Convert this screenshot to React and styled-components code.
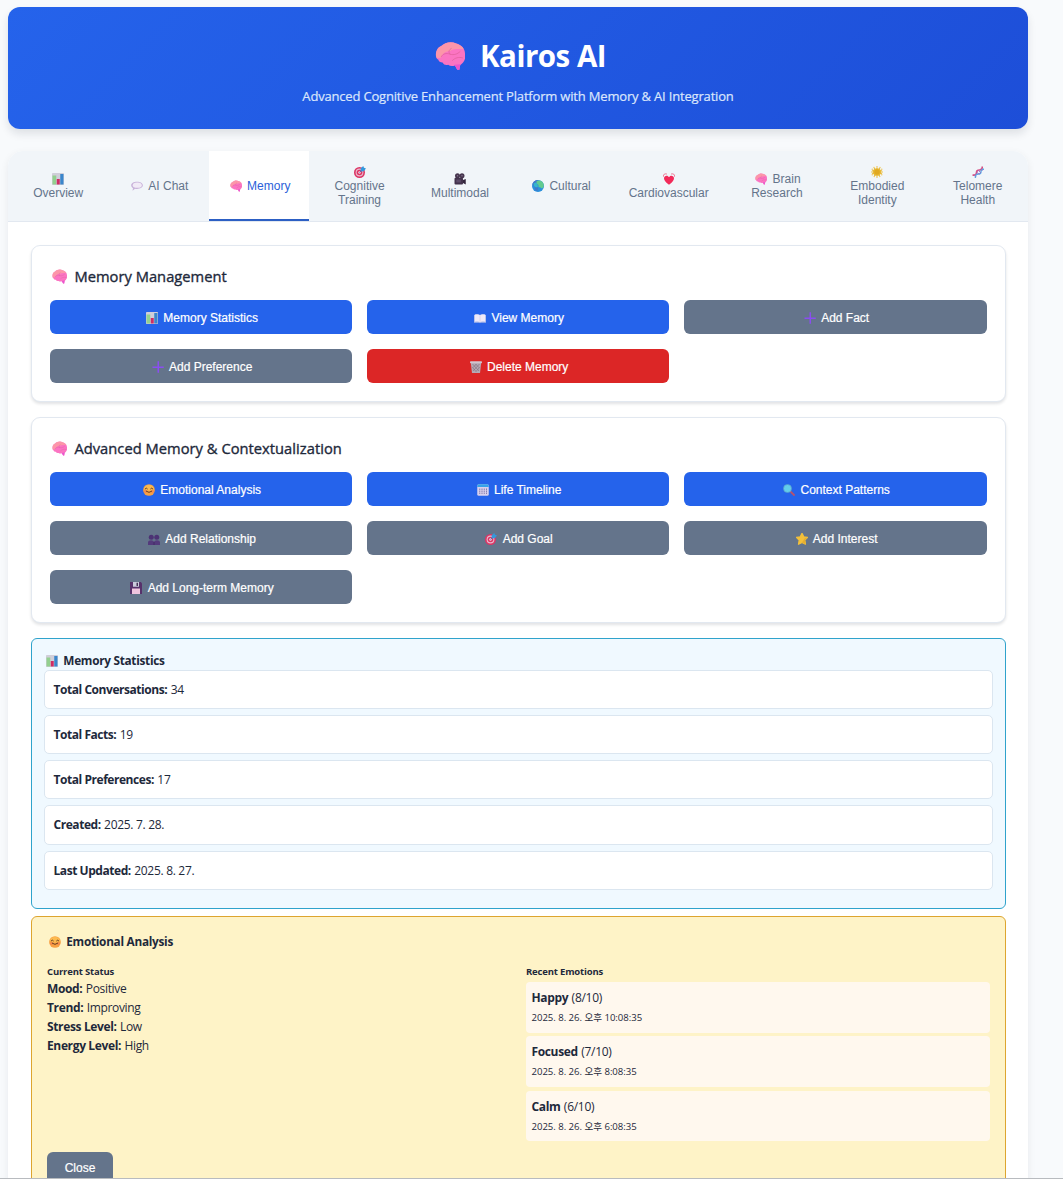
import React from "react";
import styled, { createGlobalStyle, css } from "styled-components";

const ui = `"Open Sans", "Noto Sans", "Noto Sans CJK KR", sans-serif`;
const control = `"Liberation Sans", Arial, sans-serif`;

const GlobalStyle = createGlobalStyle`
  *, *::before, *::after { box-sizing: border-box; }
  html, body { margin: 0; padding: 0; background: #f8fafc; }
  body { font-family: ${ui}; color: #1e293b; overflow: hidden; }
  h1, h2, h3, h4, p { margin: 0; }
`;

/* ---------- icons ---------- */

const glyphs = {
  brain: (
    <>
      <path d="M1 13C0 9 2 5 5 4c3-3 8-4 12-2 4 1 7 4 7 8 1 4-1 7-3 8.500l-1 1L19.500 23h-1.700L16 19.500c-2 .8-4 .6-5.500-.5-2 .5-3.500 0-4.500-1.800-1.800 0-3-.8-3.300-2.200C1.800 14.500 1.200 14 1 13z" fill="#fb74c2" />
      <path d="M1 13C0 9 2 5 5 4c3-3 8-4 12-2 3 .8 5 2.500 6 4.500-4 0-8-.5-11 1.500-4 .5-6 2-7 5-1 .8-3 1-4 0z" fill="#fb9ca4" opacity=".85" />
      <path d="M5 12.500c1.500-2.500 4-3 7-2 3 1 6 0 8-2M12 10.500c-1.500-1.500-1-3.500 1-4.500M14 15.500c2-2 5-3 8-2" stroke="#e0609c" strokeWidth=".6" fill="none" strokeLinecap="round" />
      <path d="M15.500 19l2.300 4h1.700l.8-4.500z" fill="#ea55cf" />
    </>
  ),
  chart: (
    <>
      <rect x="0" y="0" width="24" height="24" rx="1.500" fill="#d0ced9" />
      <rect x="1" y="5" width="7.500" height="18" fill="#93d08f" />
      <rect x="9.500" y="12" width="6" height="11" fill="#cf2c64" />
      <rect x="16.500" y="2" width="6.500" height="21" fill="#3a86cc" />
    </>
  ),
  chat: (
    <>
      <path d="M12 3.500c7 0 11.700 3.200 11.700 7.200S19 18 12 18c-1.500 0-3-.1-4-.4L3 21.500l1-5.200C1.500 14.900.3 13 .3 10.700.3 6.700 5 3.500 12 3.500z" fill="#c9b3da" />
      <ellipse cx="12.500" cy="10.300" rx="9" ry="5.200" fill="#f1eaf6" />
    </>
  ),
  target: (
    <>
      <circle cx="11" cy="13" r="11" fill="#dc3565" />
      <circle cx="11" cy="13" r="7.800" fill="#e9b9cd" />
      <circle cx="11" cy="13" r="5.600" fill="#dc3565" />
      <circle cx="11" cy="13" r="2.400" fill="#f3dce8" />
      <path d="M11 13L18 6" stroke="#7259a0" strokeWidth="1.800" />
      <path d="M13 10l.5-5.500L18.500 0l1.500 3.500L24 5l-4.500 5.500-5.500.3z" fill="#3498dc" />
    </>
  ),
  camera: (
    <>
      <circle cx="7" cy="5.500" r="5" fill="#47364f" />
      <circle cx="16" cy="5.500" r="5" fill="#47364f" />
      <rect x="1" y="9.500" width="17" height="13.500" rx="2" fill="#43324c" />
      <path d="M18 14l5.500-2v11L18 20z" fill="#34263d" />
      <rect x="4.500" y="13" width="9" height="6" fill="#5d4b69" />
      <circle cx="7" cy="5.500" r="1.500" fill="#85748f" />
      <circle cx="16" cy="5.500" r="1.500" fill="#85748f" />
    </>
  ),
  globe: (
    <>
      <circle cx="12" cy="12" r="12" fill="#2b90dc" />
      <path d="M12 0C6 0 2 4 .5 8.500L5 13l2 8 4 1 1-6-3-3 4-4-3-4z" fill="#4278c9" />
      <path d="M9 2.500c5-3 11-1 13.500 4C25 12 23 15 20 17l-3-2-4-1 0-4-4-3z" fill="#62cb8f" />
      <path d="M3 7l5-2 3 3 1 5-4 2-4-3z" fill="#35b6cc" />
    </>
  ),
  heart: (
    <>
      <path d="M12 23.500C5 18.500 2 14.500 2 10.500c0-6 8-7 10-2 2-5 10-4 10 2 0 4-3 8-10 13z" fill="#f22a59" />
      <path d="M.8 6.500C0 2.500 4 .8 7 1.800M23.200 6.500c.8-4-3.200-5.700-6.200-4.700" stroke="#f0718f" strokeWidth="2" fill="none" strokeLinecap="round" />
    </>
  ),
  sun: (
    <>
      <g fill="#edcb66">
        <circle cx="12" cy="1.600" r="1.600" />
        <circle cx="12" cy="22.400" r="1.600" />
        <circle cx="1.600" cy="12" r="1.600" />
        <circle cx="22.400" cy="12" r="1.600" />
        <circle cx="6" cy="3" r="1.500" />
        <circle cx="18" cy="3" r="1.500" />
        <circle cx="2.500" cy="6.500" r="1.500" />
        <circle cx="21.500" cy="6.500" r="1.500" />
        <circle cx="2.500" cy="17.500" r="1.500" />
        <circle cx="21.500" cy="17.500" r="1.500" />
        <circle cx="6.500" cy="21" r="1.500" />
        <circle cx="17.500" cy="21" r="1.500" />
      </g>
      <path d="M12 2l2 3.500 4-2 .3 4.200 4.200 1.300L20 12l2.500 3.500-4.200 1 -.8 4-3.800-1.500L12 22.500 10.300 19l-3.800 1.500-.8-4-4.200-1L4 12 1.500 9l4.200-1.300L6 3.500l4 2z" fill="#e8b937" />
      <circle cx="12" cy="12" r="5.500" fill="#e0a820" />
    </>
  ),
  dna: (
    <>
      <path d="M1 18c5 1 8-1 8-5s2-5 6-5c4 0 6-3 5.500-7" stroke="#d44d83" strokeWidth="3.200" fill="none" />
      <path d="M7 24c-1-5 1-8 6-8 4 0 5-2 5-5 0-3 2-5 6-4.500" stroke="#5aa6e4" strokeWidth="2.800" fill="none" />
      <path d="M5 18l3 3M9 12l6 5M12 8l6 6M17 6l4 3" stroke="#9a6fc3" strokeWidth="1.800" />
    </>
  ),
  book: (
    <>
      <path d="M0 6h24v15.500H13l-1 1-1-1H0z" fill="#a5b6ea" />
      <path d="M1.500 5c4-.8 8.500-.8 10.500 1 2-1.800 6.500-1.800 10.500-1v14.500c-4-1-8.500-1-10.500 1-2-2-6.500-2-10.500-1z" fill="#efe9f8" />
      <path d="M12 6v14" stroke="#cbc3e6" strokeWidth="1.100" />
    </>
  ),
  plus: <path d="M11 0.500h3V11h9.500v3H14v9.500h-3V14H1v-3h10z" fill="#8a4df0" />,
  trash: (
    <>
      <path d="M1.500 3h21L20 24H4z" fill="#b5a9b4" />
      <path d="M5 6l13 14M11 6l8 8M5 13l7 8M19 6L6 20M13 6l-8 8M19 13l-7 8" stroke="#83707f" strokeWidth="1.300" />
      <rect x="0" y="0.500" width="24" height="3.800" rx="1.500" fill="#d1c6d0" />
    </>
  ),
  smile: (
    <>
      <circle cx="12" cy="12" r="11.700" fill="#f8a142" />
      <path d="M2 9a10.500 10.500 0 0 1 20 1c-4 4-15 5-20-1z" fill="#fcc152" opacity=".8" />
      <circle cx="5" cy="15" r="3.200" fill="#f57d52" opacity=".6" />
      <circle cx="19" cy="15" r="3.200" fill="#f57d52" opacity=".6" />
      <path d="M4.500 9.500q2.300-3 4.300 0M15.200 9.500q2.300-3 4.300 0M6.500 14.500q5.500 5 11 0" stroke="#59331f" strokeWidth="1.800" fill="none" strokeLinecap="round" />
    </>
  ),
  calendar: (
    <>
      <rect x="0.500" y="0.500" width="23" height="23" rx="3" fill="#d8d0ec" />
      <path d="M.5 6V3.500a3 3 0 0 1 3-3h17a3 3 0 0 1 3 3V6z" fill="#35a2ea" />
      <path d="M5.500 9v11M10 9v11M14.500 9v11M19 9v11" stroke="#8279ae" strokeWidth="1.900" strokeDasharray="3 1" />
    </>
  ),
  search: (
    <>
      <path d="M15 15l7 7" stroke="#b4536f" strokeWidth="3.600" strokeLinecap="round" />
      <circle cx="9" cy="9" r="8" fill="#62cdeb" stroke="#5a9cc8" strokeWidth="1.300" />
    </>
  ),
  people: (
    <>
      <circle cx="6.500" cy="8.500" r="5" fill="#4c3274" />
      <circle cx="17.500" cy="8.500" r="5" fill="#4c3274" />
      <path d="M0 24v-5c0-6 12-6 12 0 0-6 12-6 12 0v5z" fill="#543a7c" />
      <path d="M12 18v6" stroke="#392457" strokeWidth="1.300" />
    </>
  ),
  star: (
    <>
      <path d="M12 .8l3.600 6.900 7.600 1.100-5.500 5.500L19 22.500 12 19l-7 3.500 1.300-8.200L.8 8.800l7.600-1.100z" fill="#f3c03a" stroke="#f3c03a" strokeWidth="2.400" strokeLinejoin="round" />
      <path d="M12 19l7 3.500-1.300-8.200 5.500-5.500-5.500 1.500z" fill="#dda128" opacity=".6" />
    </>
  ),
  floppy: (
    <>
      <path d="M0 0h21.500L24 2.500V24H0z" fill="#57316b" />
      <rect x="6" y="0" width="12" height="9.500" fill="#c9cadb" />
      <rect x="13" y="1.500" width="3" height="6.500" fill="#463056" />
      <rect x="4" y="13" width="16" height="11" fill="#efc4de" />
    </>
  ),
};

const Svg = styled.svg`
  display: inline-block;
  flex: none;
  width: ${(p) => p.$size}px;
  height: ${(p) => p.$size}px;
`;

const Icon = ({ name, size = 12, className }) => (
  <Svg className={className} viewBox="0 0 24 24" $size={size} aria-hidden="true">
    {glyphs[name]}
  </Svg>
);

/* ---------- page ---------- */

const Page = styled.div`
  height: 1179px;
  padding: 7px 35px 0 8px;
  border-bottom: 1px solid #b8bbbf;
  overflow: hidden;
  display: flex;
  flex-direction: column;
  gap: 22px;
`;

const Header = styled.header`
  flex: none;
  height: 122px;
  padding-top: 28px;
  border-radius: 12px;
  color: #fff;
  background: linear-gradient(135deg, #2563eb 0%, #1d4ed8 100%);
  box-shadow: 0 5px 9px rgba(15, 23, 42, 0.11);
  display: flex;
  flex-direction: column;
  align-items: center;
`;

const Title = styled.h1`
  display: flex;
  align-items: center;
  gap: 15px;
  padding-left: 5px;
  font-size: 29.5px;
  line-height: 42px;
  font-weight: 700;
  letter-spacing: -0.5px;
`;

const Subtitle = styled.p`
  margin-top: 10px;
  font-size: 13px;
  line-height: 18px;
  letter-spacing: -0.18px;
  color: #dbe6fc;
  -webkit-text-stroke: 0.2px #dbe6fc;
`;

const Shell = styled.main`
  flex: none;
  height: 1100px;
  overflow: hidden;
  border-radius: 15px;
  background: #fff;
  box-shadow: 0 3px 9px rgba(15, 23, 42, 0.07);
`;

const Tabs = styled.nav`
  display: grid;
  grid-template-columns: repeat(6, 1fr) 116px repeat(3, 1fr);
  height: 71px;
  background: #f1f5f9;
  border-bottom: 1px solid #e2e8f0;
`;

const Tab = styled.button`
  border: 0;
  border-bottom: 2px solid transparent;
  padding: 2px 0 0;
  background: none;
  color: #64748b;
  font: 400 12px/14px ${control};
  display: flex;
  flex-direction: column;
  align-items: center;
  justify-content: center;
  ${(p) =>
    p.$active &&
    css`
      background: #fff;
      color: #2b5fd9;
      border-bottom-color: #2c5fc4;
    `}
`;

const TabLine = styled.span`
  display: flex;
  align-items: center;
  height: 14px;
  white-space: pre;
`;

const LeadIcon = styled(Icon)`
  margin: 0 5.2px 0 2.2px;
`;

const Content = styled.div`
  padding: 23px 22px 0 23px;
`;

const Card = styled.section`
  margin-bottom: 15px;
  padding: 18px 18px 18px;
  border: 1px solid #e2e8f0;
  border-radius: 9px;
  background: #fff;
  box-shadow: 0 2px 3px rgba(15, 23, 42, 0.12);
`;

const CardTitle = styled.h2`
  display: flex;
  align-items: center;
  gap: 7.4px;
  height: 24px;
  margin-bottom: 12px;
  padding-left: 2px;
  font-size: 14.7px;
  font-weight: 500;
  letter-spacing: 0.03px;
  -webkit-text-stroke: 0.35px #1e293b;
`;

const ButtonGrid = styled.div`
  display: grid;
  grid-template-columns: 302px 302px 1fr;
  gap: 15px;
`;

const tones = { primary: "#2563eb", muted: "#64748b", danger: "#dc2626" };

const Button = styled.button`
  display: flex;
  align-items: center;
  justify-content: center;
  height: 34px;
  padding: 2px 18px 0;
  border: 0;
  border-radius: 6px;
  color: #fff;
  background: ${(p) => tones[p.$tone]};
  font: 400 12px/14px ${control};
  -webkit-text-stroke: 0.2px #fff;
`;

const StatsPanel = styled.section`
  height: 271px;
  margin-bottom: 7px;
  padding: 13px 12px 0;
  border: 1px solid #2fa3cc;
  border-radius: 6px;
  background: #f0f9ff;
`;

const PanelTitle = styled.h3`
  display: flex;
  align-items: center;
  gap: 5.8px;
  height: 18px;
  padding-left: 1.5px;
  font-size: 11.8px;
  line-height: 16px;
  font-weight: 700;
  letter-spacing: -0.28px;
`;

const PanelTitleText = styled.span`
  height: 18px;
`;

const StatRow = styled.p`
  height: 39.140px;
  margin-bottom: 6px;
  padding-left: 8.5px;
  border: 1px solid #dbe6f0;
  border-radius: 5px;
  background: #fff;
  font-size: 12px;
  line-height: 37px;
  letter-spacing: -0.3px;
`;

const Label = styled.strong`
  margin-right: 0.6px;
  font-weight: 700;
  letter-spacing: ${(p) => (p.$loose ? -0.36 : -0.45)}px;
`;

const EmotionPanel = styled.section`
  height: 290px;
  padding: 16px 15px 0;
  border: 1px solid #dda52f;
  border-radius: 6px;
  background: #fef3c7;
`;

const Columns = styled.div`
  display: grid;
  grid-template-columns: 1fr 1fr;
  gap: 15px;
  height: 189px;
  margin-top: 12px;
`;

const SmallHead = styled.h4`
  height: ${(p) => p.$height}px;
  font-size: 9.5px;
  line-height: 17px;
  font-weight: 700;
  letter-spacing: -0.17px;
`;

const StatusLine = styled.p`
  font-size: 12px;
  line-height: 19px;
  letter-spacing: -0.33px;
`;

const EmotionItem = styled.article`
  height: 50.800px;
  margin: 2px 0 3.500px;
  padding: 5px 5.5px 0;
  border-radius: 4px;
  background: #fff8ee;
  font-size: 12px;
  line-height: 21px;
  letter-spacing: -0.27px;
`;

const Stamp = styled.p`
  font-size: 9.6px;
  line-height: 20.500px;
  letter-spacing: -0.04px;
`;

const CloseButton = styled(Button)`
  width: 66px;
  padding: 0 18px 2px;
`;

const tabs = [
  { icon: "chart", lines: ["Overview"], stacked: true },
  { icon: "chat", lines: ["AI Chat"] },
  { icon: "brain", lines: ["Memory"], active: true },
  { icon: "target", lines: ["Cognitive", "Training"], stacked: true },
  { icon: "camera", lines: ["Multimodal"], stacked: true },
  { icon: "globe", lines: ["Cultural"] },
  { icon: "heart", lines: ["Cardiovascular"], stacked: true },
  { icon: "brain", lines: ["Brain", "Research"] },
  { icon: "sun", lines: ["Embodied", "Identity"], stacked: true },
  { icon: "dna", lines: ["Telomere", "Health"], stacked: true },
];

const cards = [
  {
    title: "Memory Management",
    actions: [
      ["chart", "Memory Statistics", "primary"],
      ["book", "View Memory", "primary"],
      ["plus", "Add Fact", "muted"],
      ["plus", "Add Preference", "muted"],
      ["trash", "Delete Memory", "danger"],
    ],
  },
  {
    title: "Advanced Memory & Contextualization",
    actions: [
      ["smile", "Emotional Analysis", "primary"],
      ["calendar", "Life Timeline", "primary"],
      ["search", "Context Patterns", "primary"],
      ["people", "Add Relationship", "muted"],
      ["target", "Add Goal", "muted"],
      ["star", "Add Interest", "muted"],
      ["floppy", "Add Long-term Memory", "muted"],
    ],
  },
];

const stats = [
  ["Total Conversations:", "34"],
  ["Total Facts:", "19"],
  ["Total Preferences:", "17"],
  ["Created:", "2025. 7. 28."],
  ["Last Updated:", "2025. 8. 27."],
];

const status = [
  ["Mood:", "Positive"],
  ["Trend:", "Improving"],
  ["Stress Level:", "Low"],
  ["Energy Level:", "High"],
];

const emotions = [
  ["Happy", "(8/10)", "2025. 8. 26. 오후 10:08:35"],
  ["Focused", "(7/10)", "2025. 8. 26. 오후 8:08:35"],
  ["Calm", "(6/10)", "2025. 8. 26. 오후 6:08:35"],
];

export default function App() {
  return (
    <>
      <GlobalStyle />
      <Page>
        <Header>
          <Title>
            <Icon name="brain" size={30} />
            Kairos AI
          </Title>
          <Subtitle>Advanced Cognitive Enhancement Platform with Memory &amp; AI Integration</Subtitle>
        </Header>
        <Shell>
          <Tabs>
            {tabs.map((tab) => (
              <Tab key={tab.lines[0]} $active={tab.active}>
                {tab.stacked && (
                  <TabLine>
                    <Icon name={tab.icon} />
                  </TabLine>
                )}
                {tab.lines.map((line, i) => (
                  <TabLine key={line}>
                    {!tab.stacked && i === 0 && <LeadIcon name={tab.icon} />}
                    {line}
                  </TabLine>
                ))}
              </Tab>
            ))}
          </Tabs>
          <Content>
            {cards.map((card) => (
              <Card key={card.title}>
                <CardTitle>
                  <Icon name="brain" size={15} />
                  {card.title}
                </CardTitle>
                <ButtonGrid>
                  {card.actions.map(([icon, label, tone]) => (
                    <Button key={label} $tone={tone}>
                      <LeadIcon name={icon} />
                      {label}
                    </Button>
                  ))}
                </ButtonGrid>
              </Card>
            ))}
            <StatsPanel>
              <PanelTitle>
                <Icon name="chart" />
                <PanelTitleText>Memory Statistics</PanelTitleText>
              </PanelTitle>
              {stats.map(([label, value]) => (
                <StatRow key={label}>
                  <Label>{label}</Label> {value}
                </StatRow>
              ))}
            </StatsPanel>
            <EmotionPanel>
              <PanelTitle>
                <Icon name="smile" />
                <PanelTitleText>Emotional Analysis</PanelTitleText>
              </PanelTitle>
              <Columns>
                <div>
                  <SmallHead $height={16}>Current Status</SmallHead>
                  {status.map(([label, value]) => (
                    <StatusLine key={label}>
                      <Label $loose>{label}</Label> {value}
                    </StatusLine>
                  ))}
                </div>
                <div>
                  <SmallHead $height={17}>Recent Emotions</SmallHead>
                  {emotions.map(([name, score, time]) => (
                    <EmotionItem key={name}>
                      <Label $loose>{name}</Label> {score}
                      <Stamp>{time}</Stamp>
                    </EmotionItem>
                  ))}
                </div>
              </Columns>
              <CloseButton $tone="muted">Close</CloseButton>
            </EmotionPanel>
          </Content>
        </Shell>
      </Page>
    </>
  );
}
